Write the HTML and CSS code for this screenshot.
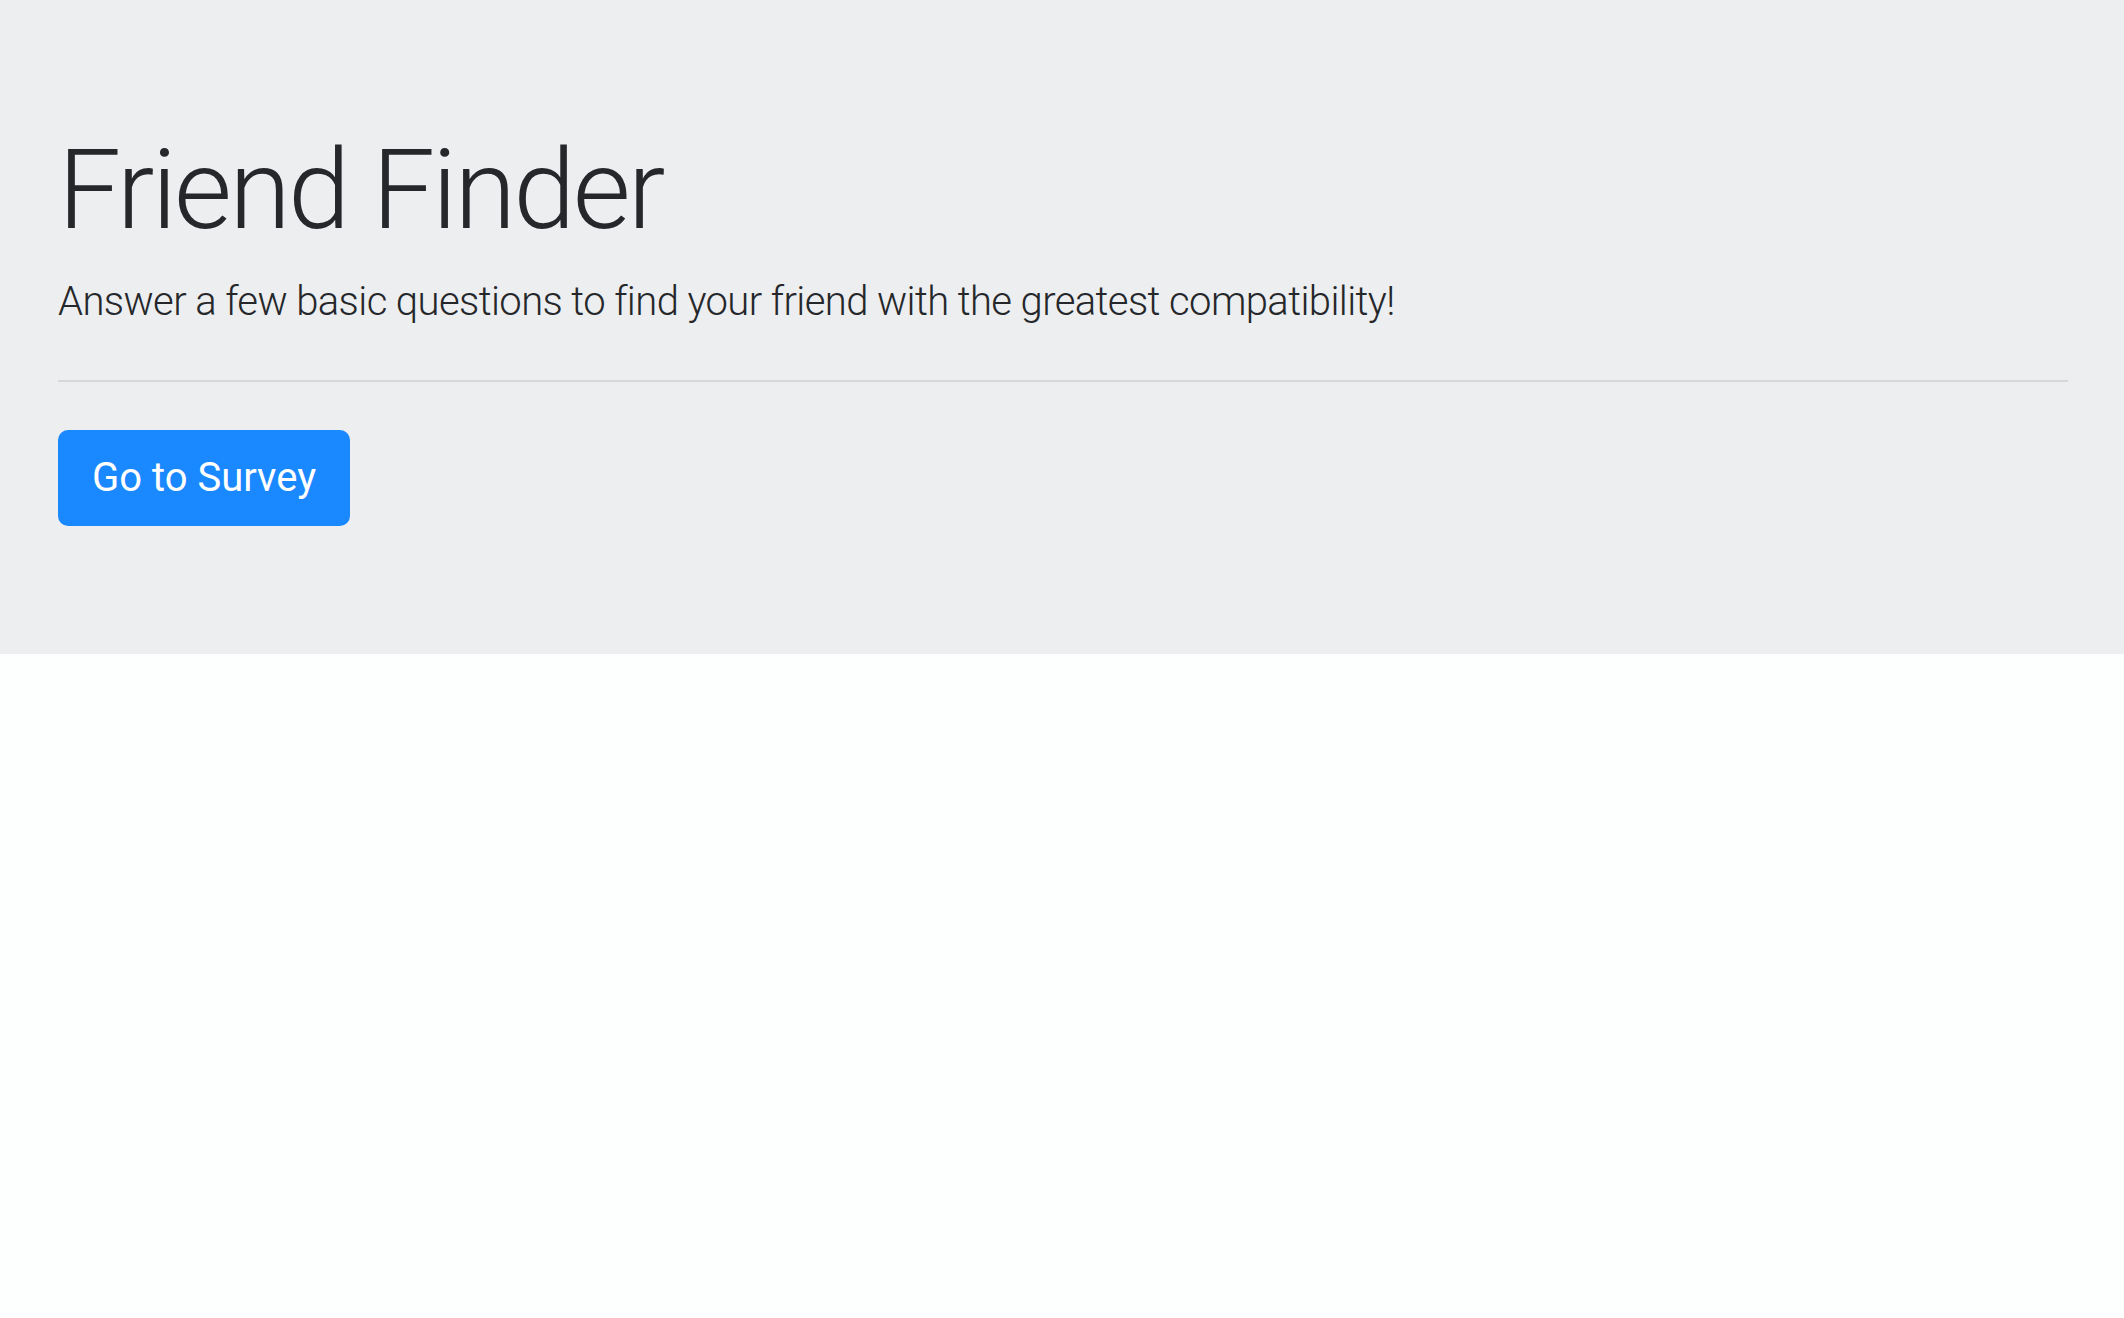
FILE: index.html
```html
<!DOCTYPE html>
<html lang="en">
<head>
<meta charset="utf-8">
<title>Friend Finder</title>
<link rel="stylesheet" href="styles.css">
</head>
<body>
  <section class="jumbotron">
    <h1 class="display">Friend Finder</h1>
    <p class="lead">Answer a few basic questions to find your friend with the greatest compatibility!</p>
    <hr class="divider">
    <a class="btn-primary" href="#">Go to Survey</a>
  </section>
</body>
</html>
```

FILE: styles.css
```css
html, body {
  margin: 0;
  padding: 0;
  background: #fdfefe;
}

body {
  font-family: Roboto, Inter, "Liberation Sans", sans-serif;
  color: #25272a;
}

.jumbotron {
  background: #eceef0;
  padding: 123px 56px 128px 58px;
  display: flex;
  flex-direction: column;
  align-items: flex-start;
}

.display {
  margin: 0 0 15px 0;
  font-size: 112px;
  font-weight: 300;
  line-height: 1.2;
  letter-spacing: -2.8px;
}

.lead {
  margin: 0;
  font-size: 40px;
  font-weight: 300;
  line-height: 60px;
  letter-spacing: -0.6px;
}

.divider {
  align-self: stretch;
  margin: 48px 0 48px 0;
  border: 0;
  border-top: 2px solid #d5d7d9;
  height: 0;
}

.btn-primary {
  display: inline-block;
  background: #1a88ff;
  border: 2px solid #1a88ff;
  border-radius: 10px;
  color: #ffffff;
  text-decoration: none;
  font-size: 40px;
  font-weight: 400;
  line-height: 60px;
  padding: 16px 32px;
  letter-spacing: 0;
}
```
